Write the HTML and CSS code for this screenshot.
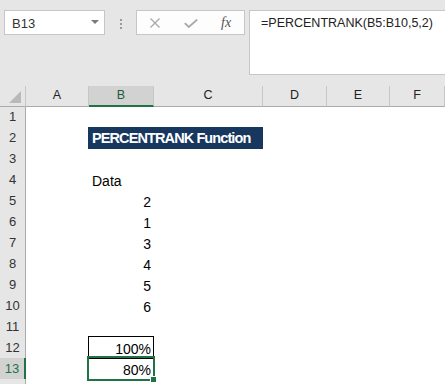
FILE: index.html
```html
<!DOCTYPE html>
<html lang="en">
  <head>
    <meta charset="UTF-8" />
    <meta name="viewport" content="width=device-width, initial-scale=1.0" />
    <title>PERCENTRANK Function</title>
    <link rel="stylesheet" href="styles.css">
  </head>
  <body>
    <!-- formula bar -->
    <div class="toolbar">
      <div class="namebox">
        <span>B13</span>
        <span class="caret"></span>
      </div>
      <div class="grip">
        <span></span><span></span><span></span>
      </div>
      <div class="fnbox">
        <svg class="icon-x" width="12" height="10" viewBox="0 0 12 10">
          <path d="M1.5 0.5 L10.5 9.5 M10.5 0.5 L1.5 9.5" stroke="#a8a8a8" stroke-width="1.3" fill="none" />
        </svg>
        <svg class="icon-check" width="14" height="9" viewBox="0 0 14 9">
          <path d="M0.8 4.2 L4.8 8 L13.2 0.6" stroke="#a8a8a8" stroke-width="1.8" fill="none" />
        </svg>
        <span class="fx">fx</span>
      </div>
      <div class="formula">=PERCENTRANK(B5:B10,5,2)</div>
    </div>

    <!-- worksheet -->
    <div class="sheet">
      <div class="row head">
        <div class="corner"><span class="corner-mark"></span></div>
        <div class="col">A</div>
        <div class="col selected">B</div>
        <div class="col">C</div>
        <div class="col">D</div>
        <div class="col">E</div>
        <div class="col">F</div>
      </div>
      <div class="row"><div class="num">1</div></div>
      <div class="row">
        <div class="num">2</div>
        <div class="cell"></div>
        <div class="cell title">PERCENTRANK Function</div>
      </div>
      <div class="row"><div class="num">3</div></div>
      <div class="row">
        <div class="num">4</div>
        <div class="cell"></div>
        <div class="cell">Data</div>
      </div>
      <div class="row"><div class="num">5</div><div class="cell"></div><div class="cell value">2</div></div>
      <div class="row"><div class="num">6</div><div class="cell"></div><div class="cell value">1</div></div>
      <div class="row"><div class="num">7</div><div class="cell"></div><div class="cell value">3</div></div>
      <div class="row"><div class="num">8</div><div class="cell"></div><div class="cell value">4</div></div>
      <div class="row"><div class="num">9</div><div class="cell"></div><div class="cell value">5</div></div>
      <div class="row"><div class="num">10</div><div class="cell"></div><div class="cell value">6</div></div>
      <div class="row"><div class="num">11</div></div>
      <div class="row">
        <div class="num">12</div>
        <div class="cell"></div>
        <div class="cell value boxed">100%</div>
      </div>
      <div class="row">
        <div class="num active">13</div>
        <div class="cell"></div>
        <div class="cell value current">80%</div>
      </div>
      <div class="row"><div class="num"></div></div>
    </div>
  </body>
</html>
```

FILE: styles.css
```css
body {
  margin: 0;
  font-family: "Liberation Sans", Arial, sans-serif;
  background-color: #fff;
  overflow: hidden;
}

/* formula bar */

.toolbar {
  display: flex;
  align-items: flex-start;
  height: 86px;
  padding: 10px 0 0 4px;
  box-sizing: border-box;
  background-color: #e6e6e6;
}

.namebox {
  display: flex;
  align-items: center;
  justify-content: space-between;
  width: 101px;
  height: 25px;
  padding: 2px 5px 0 7px;
  box-sizing: border-box;
  border: 1px solid #c6c6c6;
  background-color: #fff;
  font-size: 13px;
  color: #333;
}

.caret {
  width: 0;
  height: 0;
  margin-top: -3px;
  border-left: 4px solid transparent;
  border-right: 4px solid transparent;
  border-top: 4px solid #7a7a7a;
}

.grip {
  display: flex;
  flex-direction: column;
  align-items: center;
  gap: 2px;
  width: 31px;
  padding-top: 9px;
}

.grip span {
  width: 2px;
  height: 2px;
  background-color: #9a9a9a;
}

.fnbox {
  display: flex;
  align-items: center;
  width: 109px;
  height: 25px;
  box-sizing: border-box;
  border: 1px solid #c6c6c6;
  background-color: #fdfdfd;
}

.icon-x {
  margin-left: 12px;
}

.icon-check {
  margin-left: 23px;
  margin-top: 1px;
}

.fx {
  margin-left: 23px;
  font-family: "Liberation Serif", serif;
  font-style: italic;
  font-size: 14px;
  color: #555;
}

.formula {
  flex: 1;
  height: 65px;
  margin-left: 4px;
  margin-right: -2px;
  padding: 5px 0 0 11px;
  box-sizing: border-box;
  border: 1px solid #c6c6c6;
  background-color: #fff;
  font-size: 12.5px;
  line-height: 15px;
  color: #222;
}

/* worksheet */

.row {
  display: grid;
  grid-template-columns: 26px 63px 65px 109px 64px 63px 1fr;
  height: 21px;
}

.row.head {
  height: 20px;
}

.corner,
.col {
  position: relative;
  box-sizing: border-box;
  border-right: 1px solid #c6c6c6;
  border-bottom: 1px solid #ababab;
  background-color: #e6e6e6;
  font-size: 12.5px;
  line-height: 19px;
  text-align: center;
  color: #222;
}

.corner-mark {
  position: absolute;
  right: 4px;
  bottom: 3px;
  width: 0;
  height: 0;
  border-left: 12px solid transparent;
  border-bottom: 12px solid #b9b9b9;
}

.col.selected {
  background-color: #d2d2d2;
  border-bottom: 2px solid #217346;
  color: #1e5c38;
}

.num {
  box-sizing: border-box;
  border-right: 1px solid #ababab;
  border-bottom: 1px solid #c6c6c6;
  background-color: #e6e6e6;
  font-size: 13px;
  line-height: 21px;
  text-align: center;
  color: #333;
}

.num.active {
  background-color: #d2d2d2;
  border-right: 2px solid #217346;
  color: #217346;
}

.cell {
  position: relative;
  padding: 4px 3px 0;
  font-size: 14px;
  line-height: 17px;
  color: #000;
  white-space: nowrap;
}

.value {
  text-align: right;
}

.title {
  grid-column: span 2;
  margin-left: -1px;
  padding: 3px 4px 0;
  line-height: 16px;
  background-color: #17375e;
  color: #fff;
  font-weight: bold;
  font-size: 14.5px;
  letter-spacing: -0.9px;
}

.boxed::before {
  content: "";
  position: absolute;
  top: -1px;
  left: -1px;
  right: 0;
  bottom: 0;
  border: 1px solid #000;
}

.current::before {
  content: "";
  position: absolute;
  top: -2px;
  left: -2px;
  right: -1px;
  bottom: -1px;
  border: 2px solid #217346;
}

.current::after {
  content: "";
  position: absolute;
  right: -3px;
  bottom: -3px;
  width: 5px;
  height: 5px;
  background-color: #217346;
  border: 1px solid #fff;
}
```
